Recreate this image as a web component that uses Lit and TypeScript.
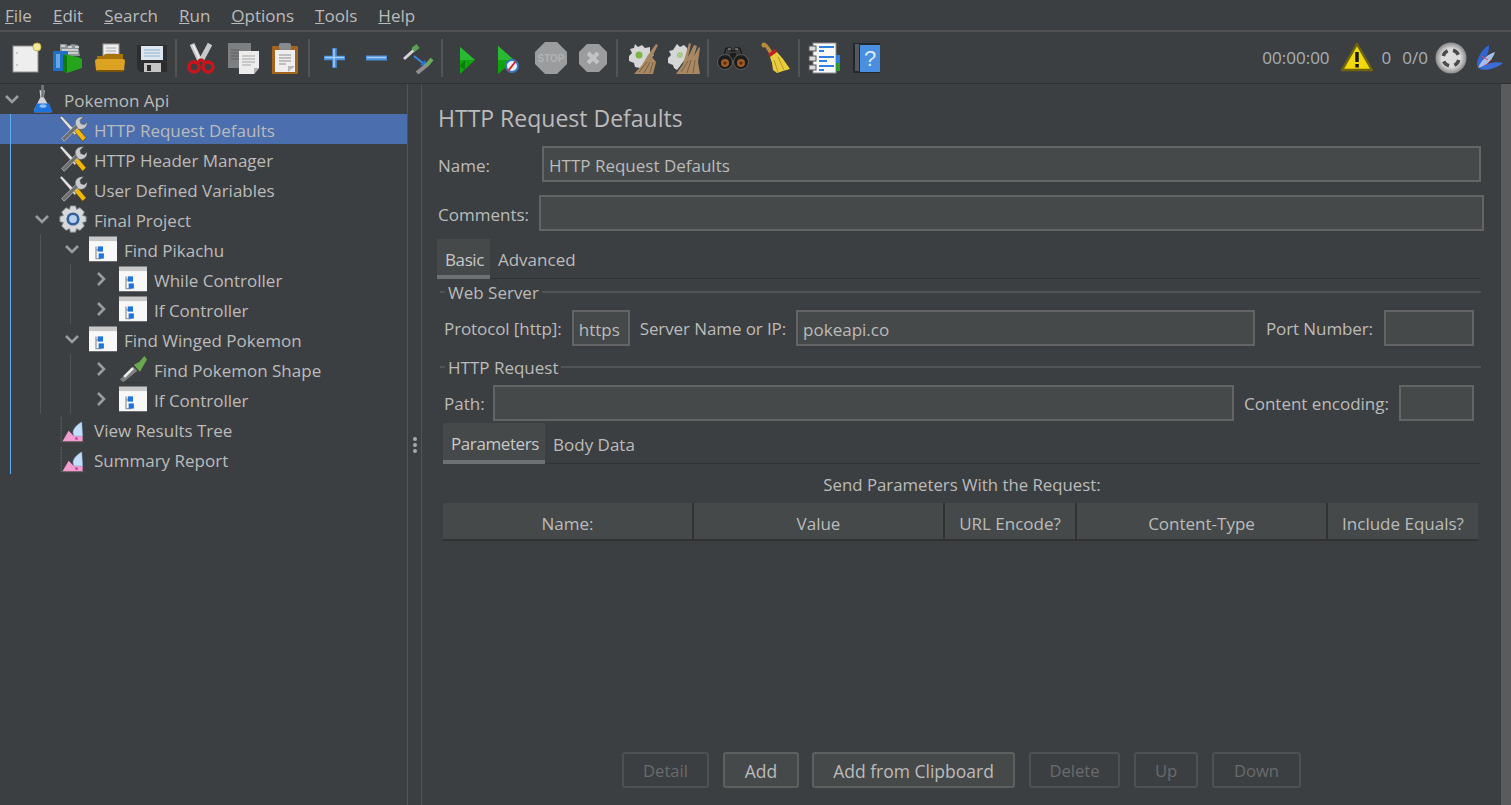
import { LitElement, css, html, svg } from "lit";
import { customElement } from "lit/decorators.js";

const icon = (body: unknown, size = 32) => html`<svg
  width=${size}
  height=${size}
  viewBox="0 0 32 32"
>
  ${body}
</svg>`;

const ICONS: Record<string, unknown> = {
  newPlan: svg`
    <rect x="3" y="4" width="25" height="26" fill="#eeeeee" stroke="#8f8f8f"/>
    <circle cx="7" cy="11" r="1" fill="#bbb"/><circle cx="7" cy="23" r="1" fill="#bbb"/>
    <circle cx="27" cy="5" r="4" fill="#f4eb9a" stroke="#c9b64a"/>`,
  templates: svg`
    <path d="M8 2h6l2 2 4-2 6 1 2 11H8z" fill="#8d9597"/>
    <path d="M9 4h4M16 5h4M23 5h4M10 8h16M10 11h16" stroke="#c9cdce" stroke-width="2"/>
    <rect x="1" y="9" width="15" height="20" rx="1" fill="#1f6fc4"/>
    <rect x="4" y="12" width="4" height="14" fill="#64a8e8"/>
    <path d="M11 12l15 3 4 2v9l-15 5-4-2z" fill="#25a51b"/>
    <path d="M11 12l4 2v17l-4-2z" fill="#0f7b0c"/>`,
  open: svg`
    <rect x="9" y="2" width="16" height="15" fill="#ececec" stroke="#999"/>
    <path d="M12 6h10M12 9h10M12 12h10" stroke="#aaa"/>
    <path d="M3 14h6l2-2h18v16H4z" fill="#a87408"/>
    <path d="M1 19q0-2 2-2h26q2 0 2 2l-1 9q0 1-2 1H4q-2 0-2-1z" fill="#dca222"/>
    <path d="M3 29h26" stroke="#7c5505" stroke-width="2"/>`,
  save: svg`
    <path d="M1 3h30v27H4l-3-3z" fill="#2b2d2f"/>
    <rect x="5" y="4" width="22" height="14" fill="#dce6f0"/>
    <path d="M8 8h16M8 11h16M8 14h16" stroke="#8eb0d0"/>
    <rect x="8" y="21" width="17" height="9" fill="#c6c6c6"/>
    <rect x="11" y="23" width="4" height="6" fill="#2b2d2f"/>`,
  cut: svg`
    <path d="M7 2l8 17M25 2l-9 17" stroke="#c9c9c9" stroke-width="5"/>
    <path d="M8 3l7 15" stroke="#f4f4f4" stroke-width="1.5"/>
    <circle cx="9" cy="25" r="5" fill="none" stroke="#c8141a" stroke-width="3.5"/>
    <circle cx="23" cy="25" r="5" fill="none" stroke="#c8141a" stroke-width="3.5"/>
    <path d="M12 21l3-3h2l3 3" fill="none" stroke="#c8141a" stroke-width="3"/>`,
  copy: svg`
    <rect x="1" y="1" width="23" height="25" fill="#7d7f80"/>
    <path d="M4 8h8M4 11h8M4 14h8M4 17h8" stroke="#5d5f60"/>
    <path d="M12 9h20v17l-5 6H12z" fill="#ececec"/>
    <path d="M15 14h13M15 17h13M15 20h13M15 23h9" stroke="#a5a5a5"/>
    <path d="M27 32v-6h5z" fill="#b0b0b0"/>`,
  paste: svg`
    <rect x="3" y="4" width="26" height="28" rx="1" fill="#a5641d"/>
    <rect x="6" y="8" width="20" height="22" fill="#eeeeee"/>
    <rect x="10" y="1" width="12" height="7" rx="2" fill="#8a8a8a"/>
    <path d="M10 13h12M10 16h12M10 19h12M10 22h7" stroke="#8f8f8f"/>
    <path d="M19 30v-6h7z" fill="#b9b9b9"/>`,
  plus: svg`
    <path d="M6 16h21M16.5 6v20" stroke="#4a90dc" stroke-width="4.5"/>
    <path d="M7 15.5h19M16 7v18" stroke="#a9cdf2" stroke-width="1.5"/>`,
  minus: svg`
    <path d="M6 16h21" stroke="#4a90dc" stroke-width="5"/>
    <path d="M7 15.5h19" stroke="#a9cdf2" stroke-width="1.5"/>`,
  toggle: svg`
    <path d="M2 17l11-10" stroke="#d5d5d5" stroke-width="3"/>
    <path d="M11 8l5-4" stroke="#5fa052" stroke-width="5"/>
    <path d="M12 14l10 8" stroke="#3a86e0" stroke-width="2"/>
    <path d="M25 24l-7-1 5-5z" fill="#1f74dc"/>
    <path d="M15 31l11-9" stroke="#8d8f8e" stroke-width="4"/>
    <path d="M25 23l5-6" stroke="#6ba85c" stroke-width="4"/>`,
  start: svg`
    <path d="M9 5l15 13-15 14z" fill="#0fa30f"/>
    <path d="M9 5l15 13H9z" fill="#29b934"/>
    <path d="M9 24l5-6v10z" fill="#0b7d0b"/>`,
  startNoPause: svg`
    <path d="M5 4l16 14-16 14z" fill="#0fa30f"/>
    <path d="M5 4l16 14H5z" fill="#29b934"/>
    <circle cx="19" cy="24" r="6" fill="#e8eef5" stroke="#3677c4" stroke-width="2"/>
    <path d="M15 29l8-10" stroke="#c92a2a" stroke-width="2"/>`,
  stop: svg`
    <path d="M10 0h12l10 10v12L22 32H10L0 22V10z" fill="#9b9c9d"/>
    <text x="16" y="20" text-anchor="middle" font-size="10" font-weight="700" font-family="Liberation Sans" fill="#b1b2b3">STOP</text>`,
  shutdown: svg`
    <path d="M10 2h12l8 8v12l-8 8H10l-8-8V10z" fill="#9b9c9d"/>
    <path d="M11 11l10 10M21 11L11 21" stroke="#c2c3c4" stroke-width="4"/>`,
  clear: svg`
    <path d="M9 2l3 3 4-2 3 3 5-1v5l4 3-3 3-11 10-5-1-1-4-5-2v-5l3-3-2-4 4-1z" fill="#d6d6d6"/>
    <circle cx="13" cy="13" r="3.5" fill="#7cb545"/>
    <path d="M30 2l2 1-6 12 4 5-3 12H8l8-9 6-10z" fill="#a88763"/>
    <path d="M13 30l8-10M18 31l6-11M24 31l3-11" stroke="#7c6041"/>`,
  clearAll: svg`
    <path d="M9 2l3 3 4-2 3 3 1 4-2 6-9 12-3-2-1-3-5-2v-5l3-3-2-4 4-1z" fill="#d6d6d6"/>
    <circle cx="12" cy="13" r="3" fill="#a8c98a"/>
    <path d="M21 1l2 1-3 13 6-12 3 1-3 10 5-9 1 1-2 14 2 12H8l7-10z" fill="#a88763"/>
    <path d="M13 30l7-11M19 31l4-13M25 31l2-13" stroke="#7c6041"/>`,
  search: svg`
    <path d="M7 13l2-7h5v3h4V6h5l2 7" fill="#3a3a3a" stroke="#111"/>
    <path d="M11 7h3M18 7h3" stroke="#a5a5a5"/>
    <rect x="13" y="11" width="6" height="7" fill="#1d1d1d"/>
    <circle cx="8" cy="20" r="7.5" fill="#1d1d1d" stroke="#5d5d5d"/>
    <circle cx="24" cy="20" r="7.5" fill="#1d1d1d" stroke="#5d5d5d"/>
    <circle cx="8" cy="21" r="4" fill="#9c5a26"/>
    <circle cx="24" cy="21" r="4" fill="#9c5a26"/>
    <circle cx="8" cy="21" r="1.5" fill="#4b2a12"/>
    <circle cx="24" cy="21" r="1.5" fill="#4b2a12"/>`,
  broom: svg`
    <circle cx="5" cy="3" r="2.5" fill="#b98a3a"/>
    <path d="M5 3l3-1 6 8-3 3z" fill="#b98a3a"/>
    <path d="M9 12l7-5 2 3-7 5z" fill="#c42020"/>
    <path d="M11 15l7-5 6 7 7 10-7 2-6 2-4-3-1-7z" fill="#e9cd3c"/>
    <path d="M15 18l4 12M19 15l6 13" stroke="#b5952a"/>`,
  log: svg`
    <rect x="5" y="1" width="23" height="30" fill="#f8f8f8" stroke="#888"/>
    <path d="M11 5h15M11 15h15M11 24h15" stroke="#2f7fe0" stroke-width="2"/>
    <path d="M11 9h5M11 19h8M11 28h5" stroke="#2f7fe0" stroke-width="2"/>
    <rect x="1" y="4" width="7" height="5" fill="#dcdcdc" stroke="#555"/>
    <rect x="1" y="14" width="7" height="5" fill="#dcdcdc" stroke="#555"/>
    <rect x="1" y="23" width="7" height="5" fill="#dcdcdc" stroke="#555"/>
    <rect x="28" y="13" width="4" height="8" fill="#2f7fe0"/>
    <rect x="28" y="21" width="4" height="8" fill="#2f9a2f"/>`,
  help: svg`
    <rect x="3" y="1" width="27" height="30" fill="#24272a"/>
    <rect x="5" y="2" width="4" height="27" fill="#55585a"/>
    <rect x="10" y="3" width="20" height="27" fill="#4a8fdf"/>
    <text x="20" y="24" text-anchor="middle" font-size="22" font-family="Liberation Sans" fill="#d8e8f8">?</text>`,
  warning: svg`
    <path d="M16 2L31 28H1z" fill="#f2d90c" stroke="#6e6410" stroke-width="2.5" stroke-linejoin="round"/>
    <path d="M16 10v10" stroke="#1a1a1a" stroke-width="3.5"/><rect x="14.3" y="22" width="3.5" height="3.5" fill="#1a1a1a"/>`,
  ring: svg`
    <defs><radialGradient id="rg" cx=".5" cy=".5" r=".5"><stop offset=".6" stop-color="#dcdcdc"/><stop offset="1" stop-color="#8a8a8a"/></radialGradient></defs>
    <circle cx="16" cy="16" r="15.5" fill="url(#rg)"/>
    <circle cx="16" cy="16" r="8" fill="none" stroke="#4a4a4a" stroke-width="3.5" stroke-dasharray="7 5.5" stroke-dashoffset="-2"/>`,
  feather: svg`
    <path d="M4 25C3 17 9 7 16 3c1 7-5 17-12 22z" fill="#2f66d0"/>
    <path d="M5 26c3-8 10-14 17-16-2 7-9 15-17 16z" fill="#a9bde8"/>
    <path d="M6 27c5-5 16-8 24-6-6 5-15 8-24 6z" fill="#3a6ed6"/>
    <path d="M8 14l7 4M13 23l6-6" stroke="#d8483d"/>`,
  flask: svg`
    <path d="M12 6h6l-1 8 8 14v3H6v-3l7-14z" fill="#d3d5d9"/>
    <path d="M14 0h3v14h-3z" fill="#75787b"/>
    <path d="M9 21h14l4 10H5z" fill="#1c74dc"/>
    <ellipse cx="16" cy="24" rx="4" ry="2" fill="#8dc0f5"/>`,
  tools: svg`
    <path d="M1 3l2-2 18 19-3 3z" fill="#e3e3e3" stroke="#3a3a3a" stroke-width=".6"/>
    <path d="M17 18l4-4 10 12-4 4z" fill="#f1b70e" stroke="#5c4500" stroke-width=".8"/>
    <path d="M3 27L20 10l3 3L6 30z" fill="#6c6e70" stroke="#c8c8c8" stroke-width=".8"/>
    <path d="M19 11c-2-5 3-10 9-9l-4 4 1 4 4 1 3-3c1 6-5 10-10 8z" fill="#c7c9cc" stroke="#555" stroke-width=".6"/>`,
  gear: svg`
    <path d="M13 1h6l1 4 4-2 5 5-2 4 4 1v6l-4 1 2 4-5 5-4-2-1 4h-6l-1-4-4 2-5-5 2-4-4-1v-6l4-1-2-4 5-5 4 2z" fill="#d7d8da" stroke="#85878a"/>
    <circle cx="16" cy="16" r="7.5" fill="#34609e"/>
    <circle cx="16" cy="16" r="4.5" fill="#b7cff0"/>`,
  controller: svg`
    <rect x="0" y="2" width="32" height="28" fill="#f8f8f8"/>
    <rect x="0" y="2" width="32" height="5" fill="#c9c9c9"/>
    <path d="M8 13v14h6M8 17h4" fill="none" stroke="#9a9a9a" stroke-width="1.5"/>
    <rect x="10" y="13" width="6" height="6" fill="#1f74dc"/>
    <rect x="11" y="21" width="6" height="6" fill="#1f74dc"/>`,
  pipette: svg`
    <path d="M1 28l15-15 5 5L5 31z" fill="#7f8180"/>
    <path d="M6 25l10-10" stroke="#ededed" stroke-width="3"/>
    <path d="M17 11l6-3 6-7 3 4-4 7-4 7-3-3z" fill="#6aa84f"/>
    <path d="M3 32h24" stroke="#2f3133"/>`,
  listener: svg`
    <path d="M2.5 2v28M2 30.5h27" stroke="#6a6a6a" stroke-dasharray="2 1"/>
    <path d="M4 30l7-12 6 6h10v6z" fill="#f29ccf"/>
    <path d="M16 20c0-5 6-10 10-12l1 16H17z" fill="#c4ddf8" stroke="#7ba8d8" stroke-width=".6"/>
    <circle cx="20" cy="27" r="1.5" fill="#c03fa0"/>`,
};

const TOOLBAR = [
  ["newPlan", "templates", "open", "save"],
  ["cut", "copy", "paste"],
  ["plus", "minus", "toggle"],
  ["start", "startNoPause", "stop", "shutdown"],
  ["clear", "clearAll"],
  ["search", "broom"],
  ["log", "help"],
];

// accesskey letter comes first, the rest of the label second
const MENU = [
  ["F", "ile"],
  ["E", "dit"],
  ["S", "earch"],
  ["R", "un"],
  ["O", "ptions"],
  ["T", "ools"],
  ["H", "elp"],
];

interface TreeNode {
  label: string;
  icon: string;
  state?: "open" | "closed";
  selected?: boolean;
  children?: TreeNode[];
}

const TREE: TreeNode = {
  label: "Pokemon Api",
  icon: "flask",
  state: "open",
  children: [
    { label: "HTTP Request Defaults", icon: "tools", selected: true },
    { label: "HTTP Header Manager", icon: "tools" },
    { label: "User Defined Variables", icon: "tools" },
    {
      label: "Final Project",
      icon: "gear",
      state: "open",
      children: [
        {
          label: "Find Pikachu",
          icon: "controller",
          state: "open",
          children: [
            { label: "While Controller", icon: "controller", state: "closed" },
            { label: "If Controller", icon: "controller", state: "closed" },
          ],
        },
        {
          label: "Find Winged Pokemon",
          icon: "controller",
          state: "open",
          children: [
            { label: "Find Pokemon Shape", icon: "pipette", state: "closed" },
            { label: "If Controller", icon: "controller", state: "closed" },
          ],
        },
      ],
    },
    { label: "View Results Tree", icon: "listener" },
    { label: "Summary Report", icon: "listener" },
  ],
};

const COLUMNS = ["Name:", "Value", "URL Encode?", "Content-Type", "Include Equals?"];

const BUTTONS = [
  { label: "Detail", cls: "b-detail", off: true },
  { label: "Add", cls: "b-add", off: false },
  { label: "Add from Clipboard", cls: "b-clip", off: false },
  { label: "Delete", cls: "b-delete", off: true },
  { label: "Up", cls: "b-up", off: true },
  { label: "Down", cls: "b-down", off: true },
];

@customElement("app-root")
export class AppRoot extends LitElement {
  static styles = css`
    :host {
      display: flex;
      flex-direction: column;
      width: 1511px;
      height: 805px;
      overflow: hidden;
      background: #3c3f41;
      color: #bbbbbb;
      font-family: "Open Sans", "Noto Sans", sans-serif;
      font-size: 17px;
    }

    .menubar {
      display: flex;
      height: 30px;
      align-items: center;
      padding-left: 5px;
      gap: 21px;
      flex: none;
    }

    .menu-key {
      text-decoration: underline;
    }

    .toolbar {
      display: flex;
      align-items: center;
      flex: none;
      height: 51px;
      padding-left: 5px;
      border-top: 2px solid #515151;
      border-bottom: 1px solid #323232;
    }

    .tool {
      display: flex;
      width: 42px;
      justify-content: center;
    }

    .sep {
      width: 2px;
      height: 38px;
      margin: 0 3px 0 2px;
      background: #515354;
    }

    .status {
      display: flex;
      align-items: center;
      margin-left: auto;
      padding-right: 6px;
      color: #a9b0b5;
    }

    .timer {
      margin: 0 11px 0 0;
    }

    .warn-count {
      margin: 0 11px 0 9px;
    }

    .thread-count {
      margin-right: 7px;
    }

    .ring {
      display: flex;
      margin-right: 6px;
    }

    .body {
      display: flex;
      flex: 1;
      min-height: 0;
    }

    .tree {
      width: 407px;
      flex: none;
      isolation: isolate;
      overflow: hidden;
    }

    .row {
      position: relative;
      display: flex;
      align-items: center;
      height: 30px;
      white-space: nowrap;
    }

    .row.selected::before {
      content: "";
      position: absolute;
      top: 0;
      bottom: 0;
      left: -200px;
      right: -400px;
      z-index: -1;
      background: #4b6eaf;
    }

    .row-label {
      padding-top: 2px;
    }

    .arrow {
      display: flex;
      width: 24px;
      justify-content: center;
      flex: none;
    }

    .node-icon {
      display: flex;
      width: 30px;
      margin: 0 6px 0 4px;
      justify-content: center;
      flex: none;
    }

    .children {
      margin-left: 10px;
      padding-left: 19px;
      border-left: 1px solid #515456;
    }

    .children.root {
      border-left-color: #5cacf0;
    }

    .splitter {
      display: flex;
      flex-direction: column;
      width: 13px;
      flex: none;
      align-items: center;
      justify-content: center;
      gap: 2px;
      border-left: 1px solid #515456;
      border-right: 1px solid #515456;
      box-sizing: content-box;
    }

    .splitter i {
      width: 4px;
      height: 4px;
      border-radius: 50%;
      background: #a9a9a9;
    }

    .panel {
      display: flex;
      flex: 1;
      flex-direction: column;
      min-width: 0;
      padding: 0 20px 17px 16px;
    }

    .scroll {
      width: 10px;
      flex: none;
      background: #5a5b5c;
    }

    h1 {
      margin: 19px 0 0;
      font-size: 23px;
      font-weight: 400;
      line-height: 30px;
    }

    .form-row {
      display: flex;
      align-items: center;
    }

    .form-row label {
      padding-top: 2px;
      white-space: nowrap;
    }

    .name-row {
      margin-top: 13px;
    }

    .name-row label {
      width: 104px;
    }

    .comments-row {
      margin-top: 13px;
      margin-right: -3px;
    }

    .comments-row label {
      width: 101px;
      flex: none;
    }

    .field {
      display: flex;
      align-items: center;
      box-sizing: border-box;
      height: 36px;
      flex: 1;
      min-width: 0;
      padding: 2px 5px 0;
      border: 2px solid #646464;
      background: #45494a;
      color: #bbbbbb;
    }

    .tabs {
      display: flex;
      align-items: stretch;
      height: 40px;
      box-sizing: border-box;
      border-bottom: 1px solid #323232;
    }

    .tabs-basic {
      margin: 8px 0 0 -1px;
    }

    .tabs-params {
      margin: 2px 0 0 5px;
      height: 41px;
    }

    .tab {
      display: flex;
      align-items: center;
      padding: 0 8px;
      margin-bottom: -1px;
    }

    .tabs-params .tab {
      padding-top: 2px;
    }

    .tab.active,
    .tabs-params .tab.active {
      padding: 4px 6px 0 8px;
      background: #45494a;
      border-bottom: 4px solid #6e7174;
      color: #c8c8c8;
      letter-spacing: -0.4px;
    }

    .group {
      display: flex;
      align-items: center;
      height: 28px;
      margin-left: 2px;
      gap: 3px;
    }

    .group::before {
      content: "";
      width: 5px;
      height: 2px;
      background: #515354;
    }

    .group::after {
      content: "";
      flex: 1;
      height: 2px;
      background: #515354;
    }

    .group-web {
      margin-top: -1px;
    }

    .group-http {
      margin-top: 7px;
    }

    .fields {
      margin: 4px 7px 0 6px;
    }

    .form-row.fields label {
      padding-top: 0;
    }

    .web-fields label {
      letter-spacing: -0.1px;
    }

    .w-proto {
      flex: none;
      width: 58px;
      margin: 0 10px;
    }

    .w-server {
      margin: 0 11px 0 10px;
    }

    .w-port {
      flex: none;
      width: 90px;
      margin-left: 11px;
    }

    .w-path {
      margin: 0 10px 0 8px;
    }

    .w-enc {
      flex: none;
      width: 75px;
      margin-left: 10px;
    }

    .caption {
      margin: 6px 0 0 5px;
      text-align: center;
      line-height: 30px;
      font-size: 16.8px;
    }

    .table-head {
      display: grid;
      grid-template-columns: 251px 251px 132px 251px 150px;
      height: 38px;
      margin: 3px 3px 0 5px;
      border-bottom: 2px solid #323232;
      box-sizing: border-box;
      background: #45494a;
    }

    .table-head div {
      display: flex;
      align-items: center;
      justify-content: center;
      padding-top: 4px;
      border-right: 2px solid #323232;
    }

    .table-head div:last-child {
      border-right: none;
    }

    .actions {
      display: flex;
      margin-top: auto;
      margin-left: 184px;
    }

    .btn {
      display: flex;
      align-items: center;
      justify-content: center;
      box-sizing: border-box;
      height: 36px;
      padding-top: 1px;
      border: 2px solid #5e6060;
      border-radius: 3px;
      background: #45494a;
      font-size: 17.5px;
    }

    .btn.off {
      background: #3c3f41;
      border-color: #4e5152;
      color: #686b6d;
      font-size: 16.6px;
    }

    .b-detail {
      width: 87px;
    }

    .b-add {
      width: 76px;
      margin-left: 14px;
    }

    .b-clip {
      width: 203px;
      margin-left: 13px;
    }

    .b-delete {
      width: 91px;
      margin-left: 14px;
    }

    .b-up {
      width: 64px;
      margin-left: 14px;
    }

    .b-down {
      width: 89px;
      margin-left: 14px;
    }
  `;

  renderArrow(state?: string) {
    if (!state) return html`<span class="arrow"></span>`;
    const d = state === "open" ? "M3 6l6 6 6-6" : "M5 3l6 6-6 6";
    return html`<span class="arrow">
      <svg width="18" height="18" viewBox="0 0 18 18">
        <path d=${d} fill="none" stroke="#9a9c9e" stroke-width="2.6" />
      </svg>
    </span>`;
  }

  renderNode(node: TreeNode, root = false): unknown {
    return html`
      <div class="row ${node.selected ? "selected" : ""}">
        ${this.renderArrow(node.state)}
        <span class="node-icon">${icon(ICONS[node.icon], 28)}</span>
        <span class="row-label">${node.label}</span>
      </div>
      ${node.children
        ? html`<div class="children ${root ? "root" : ""}">
            ${node.children.map((c) => this.renderNode(c))}
          </div>`
        : ""}
    `;
  }

  renderToolbar() {
    return TOOLBAR.map(
      (group, i) => html`
        ${i > 0 ? html`<span class="sep"></span>` : ""}
        ${group.map(
          (name) => html`<span class="tool">${icon(ICONS[name])}</span>`
        )}
      `
    );
  }

  render() {
    return html`
      <div class="menubar">
        ${MENU.map(
          ([key, rest]) =>
            html`<span><span class="menu-key">${key}</span>${rest}</span>`
        )}
      </div>
      <div class="toolbar">
        ${this.renderToolbar()}
        <div class="status">
          <span class="timer">00:00:00</span>
          ${icon(ICONS.warning)}
          <span class="warn-count">0</span>
          <span class="thread-count">0/0</span>
          <span class="ring">${icon(ICONS.ring)}</span>
          ${icon(ICONS.feather)}
        </div>
      </div>
      <div class="body">
        <div class="tree">${this.renderNode(TREE, true)}</div>
        <div class="splitter"><i></i><i></i><i></i></div>
        <div class="panel">
          <h1>HTTP Request Defaults</h1>
          <div class="form-row name-row">
            <label>Name:</label>
            <div class="field">HTTP Request Defaults</div>
          </div>
          <div class="form-row comments-row">
            <label>Comments:</label>
            <div class="field"></div>
          </div>
          <div class="tabs tabs-basic">
            <div class="tab active">Basic</div>
            <div class="tab">Advanced</div>
          </div>
          <div class="group group-web">Web Server</div>
          <div class="form-row fields web-fields">
            <label>Protocol [http]:</label>
            <div class="field w-proto">https</div>
            <label>Server Name or IP:</label>
            <div class="field w-server">pokeapi.co</div>
            <label>Port Number:</label>
            <div class="field w-port"></div>
          </div>
          <div class="group group-http">HTTP Request</div>
          <div class="form-row fields">
            <label>Path:</label>
            <div class="field w-path"></div>
            <label>Content encoding:</label>
            <div class="field w-enc"></div>
          </div>
          <div class="tabs tabs-params">
            <div class="tab active">Parameters</div>
            <div class="tab">Body Data</div>
          </div>
          <div class="caption">Send Parameters With the Request:</div>
          <div class="table-head">
            ${COLUMNS.map((c) => html`<div>${c}</div>`)}
          </div>
          <div class="actions">
            ${BUTTONS.map(
              (b) =>
                html`<div class="btn ${b.cls} ${b.off ? "off" : ""}">
                  ${b.label}
                </div>`
            )}
          </div>
        </div>
        <div class="scroll"></div>
      </div>
    `;
  }
}
